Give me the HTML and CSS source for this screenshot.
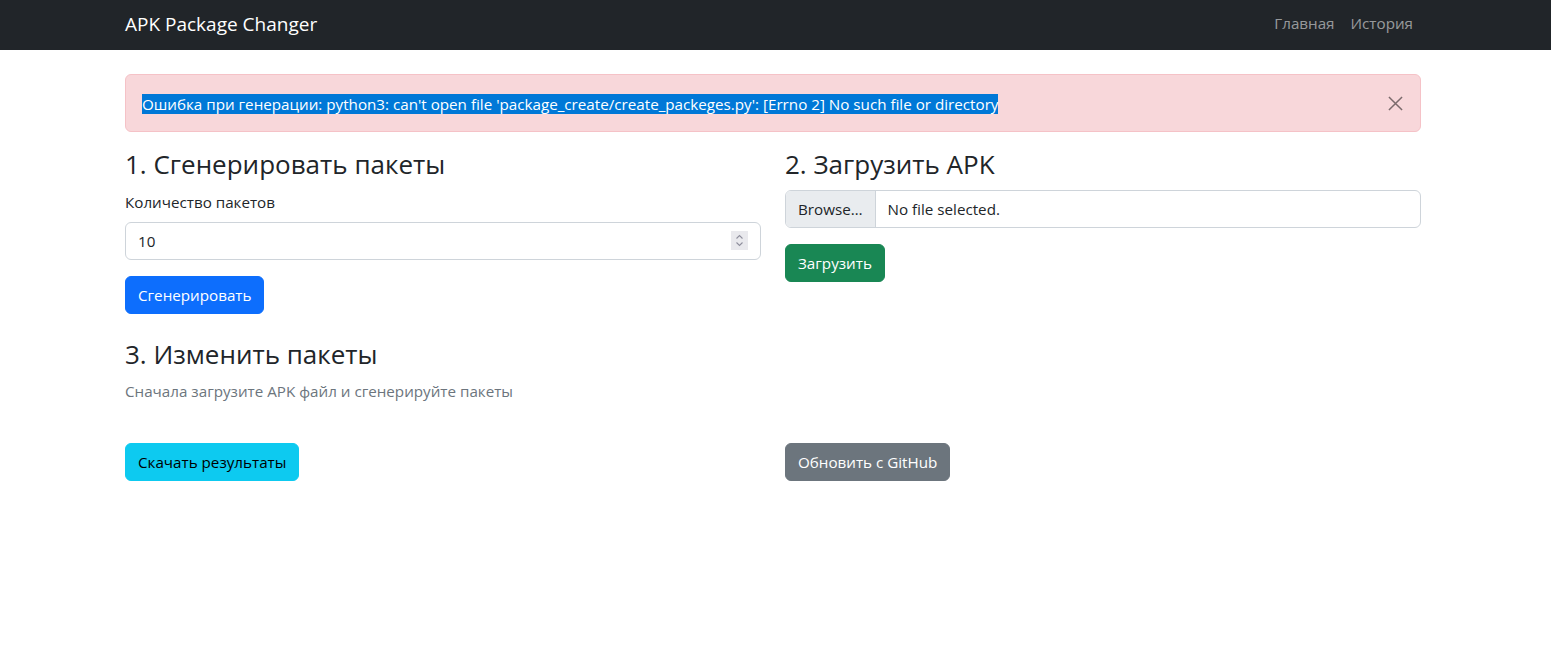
FILE: index.html
```html
<!DOCTYPE html>
<html lang="ru">
<head>
<meta charset="utf-8">
<title>APK Package Changer</title>
<link rel="stylesheet" href="styles.css">
</head>
<body>
<nav class="navbar">
  <div class="container navbar-inner">
    <a class="brand" href="#">APK Package Changer</a>
    <ul class="nav">
      <li><a class="nav-link" href="#">Главная</a></li>
      <li><a class="nav-link" href="#">История</a></li>
    </ul>
  </div>
</nav>

<main class="container main">
  <div class="alert">
    <span class="selected">Ошибка при генерации: python3: can't open file 'package_create/create_packeges.py': [Errno 2] No such file or directory</span>
    <button class="btn-close" aria-label="Close">
      <svg width="15" height="15" viewBox="0 0 16 16"><path d="M1 1L15 15M15 1L1 15" stroke="currentColor" stroke-width="1.6" fill="none"/></svg>
    </button>
  </div>

  <div class="row">
    <section class="col">
      <h3>1. Сгенерировать пакеты</h3>
      <label class="form-label">Количество пакетов</label>
      <div class="form-control number-control">
        <input class="bare-input" type="text" value="10">
        <span class="spinner">
          <svg width="17" height="19" viewBox="0 0 17 19"><path d="M5.5 7.5L8.5 4.5L11.5 7.5M5.5 11.5L8.5 14.5L11.5 11.5" stroke="#8f8f9d" stroke-width="1.1" fill="none"/></svg>
        </span>
      </div>
      <button class="btn btn-primary">Сгенерировать</button>

      <h3 class="mt">3. Изменить пакеты</h3>
      <p class="muted">Сначала загрузите APK файл и сгенерируйте пакеты</p>
    </section>
    <section class="col">
      <h3>2. Загрузить APK</h3>
      <div class="form-control file-control">
        <span class="file-btn">Browse…</span>
        <span class="file-name">No file selected.</span>
      </div>
      <button class="btn btn-success">Загрузить</button>
    </section>
  </div>

  <div class="row actions">
    <div class="col"><button class="btn btn-info">Скачать результаты</button></div>
    <div class="col"><button class="btn btn-secondary">Обновить с GitHub</button></div>
  </div>
</main>
</body>
</html>
```

FILE: styles.css
```css
* { box-sizing: border-box; }

body {
  margin: 0;
  padding-right: 5px;
  font-family: "Open Sans", "Noto Sans", sans-serif;
  font-size: 15.2px;
  line-height: 24px;
  color: #212529;
  background: #fff;
}

.container {
  max-width: 1320px;
  margin: 0 auto;
  padding: 0 12px;
}

.navbar {
  background: #212529;
  height: 50px;
  margin-right: -5px;
  padding-right: 5px;
}

.navbar-inner {
  height: 50px;
  display: flex;
  align-items: center;
  justify-content: space-between;
}

.brand {
  color: #fff;
  font-size: 19px;
  text-decoration: none;
  line-height: 30px;
  padding-bottom: 2px;
}

.nav {
  display: flex;
  list-style: none;
  margin: 0;
  padding: 0;
}

.nav-link {
  display: block;
  padding: 6px 8px 10px;
  color: rgba(255, 255, 255, 0.55);
  text-decoration: none;
}

.main {
  padding-top: 24px;
}

.alert {
  position: relative;
  background: #f8d7da;
  border: 1px solid #f5c2c7;
  border-radius: 6px;
  color: #842029;
  padding: 17px 48px 15px 16px;
  margin-bottom: 16px;
}

.selected {
  background: #0078d7;
  color: #fff;
}

.btn-close {
  position: absolute;
  top: 0;
  right: 0;
  height: 100%;
  width: 50px;
  padding: 0;
  border: 0;
  background: transparent;
  color: #000;
  opacity: 0.5;
  display: flex;
  align-items: center;
  justify-content: center;
}

.row {
  display: grid;
  grid-template-columns: 1fr 1fr;
  column-gap: 24px;
}

h3 {
  font-size: 26px;
  font-weight: 500;
  line-height: 33.6px;
  margin: 0 0 8px;
}

h3.mt {
  margin-top: 24px;
}

.form-label {
  display: block;
  margin-bottom: 8px;
}

.form-control {
  display: flex;
  align-items: center;
  height: 38px;
  border: 1px solid #ced4da;
  border-radius: 6px;
  background: #fff;
  margin-bottom: 16px;
  overflow: hidden;
}

.number-control {
  padding: 0 12px 0 0;
}

.bare-input {
  flex: 1;
  border: 0;
  outline: 0;
  padding: 6px 12px;
  font: inherit;
  color: #212529;
  background: transparent;
}

.spinner {
  display: flex;
  width: 17px;
  height: 19px;
  background: #e9e9ed;
}

.file-btn {
  height: 100%;
  display: flex;
  align-items: center;
  padding: 0 12px;
  background: #e9ecef;
  border-right: 1px solid #ced4da;
}

.file-name {
  padding: 0 12px;
}

.btn {
  display: inline-block;
  font: inherit;
  line-height: 24px;
  padding: 6px 12px;
  border: 1px solid transparent;
  border-radius: 6px;
  cursor: pointer;
}

.btn-primary { background: #0d6efd; border-color: #0d6efd; color: #fff; }
.btn-success { background: #198754; border-color: #198754; color: #fff; }
.btn-info { background: #0dcaf0; border-color: #0dcaf0; color: #000; }
.btn-secondary { background: #6c757d; border-color: #6c757d; color: #fff; }

.muted {
  color: #6c757d;
  margin: 0 0 16px;
}

.actions {
  margin-top: 24px;
}
```
